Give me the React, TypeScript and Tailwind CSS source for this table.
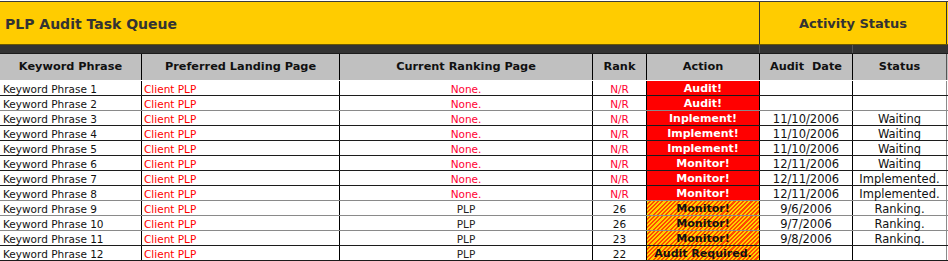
import React from "react";

type Row = {
  keyword: string;
  current: string;
  rank: string;
  action: string;
  hatch: boolean;
  date: string;
  status: string;
  line: "dark" | "gray";
};

const rows: Row[] = [
  { keyword: "Keyword Phrase 1", current: "None.", rank: "N/R", action: "Audit!", hatch: false, date: "", status: "", line: "dark" },
  { keyword: "Keyword Phrase 2", current: "None.", rank: "N/R", action: "Audit!", hatch: false, date: "", status: "", line: "gray" },
  { keyword: "Keyword Phrase 3", current: "None.", rank: "N/R", action: "Inplement!", hatch: false, date: "11/10/2006", status: "Waiting", line: "dark" },
  { keyword: "Keyword Phrase 4", current: "None.", rank: "N/R", action: "Implement!", hatch: false, date: "11/10/2006", status: "Waiting", line: "dark" },
  { keyword: "Keyword Phrase 5", current: "None.", rank: "N/R", action: "Implement!", hatch: false, date: "11/10/2006", status: "Waiting", line: "dark" },
  { keyword: "Keyword Phrase 6", current: "None.", rank: "N/R", action: "Monitor!", hatch: false, date: "12/11/2006", status: "Waiting", line: "dark" },
  { keyword: "Keyword Phrase 7", current: "None.", rank: "N/R", action: "Monitor!", hatch: false, date: "12/11/2006", status: "Implemented.", line: "dark" },
  { keyword: "Keyword Phrase 8", current: "None.", rank: "N/R", action: "Monitor!", hatch: false, date: "12/11/2006", status: "Implemented.", line: "gray" },
  { keyword: "Keyword Phrase 9", current: "PLP", rank: "26", action: "Monitor!", hatch: true, date: "9/6/2006", status: "Ranking.", line: "gray" },
  { keyword: "Keyword Phrase 10", current: "PLP", rank: "26", action: "Monitor!", hatch: true, date: "9/7/2006", status: "Ranking.", line: "gray" },
  { keyword: "Keyword Phrase 11", current: "PLP", rank: "23", action: "Monitor!", hatch: true, date: "9/8/2006", status: "Ranking.", line: "dark" },
  { keyword: "Keyword Phrase 12", current: "PLP", rank: "22", action: "Audit Required.", hatch: true, date: "", status: "", line: "dark" },
];

const headers = [
  { label: "Keyword Phrase", w: "w-[142px]" },
  { label: "Preferred Landing Page", w: "w-[198px]" },
  { label: "Current Ranking Page", w: "w-[253px]" },
  { label: "Rank", w: "w-[54px]" },
  { label: "Action", w: "w-[113px]" },
  { label: "Audit  Date", w: "w-[93px]" },
  { label: "Status", w: "w-[94px]" },
];

function DataRow({ row }: { row: Row }) {
  const line = row.line === "gray" ? "border-b-[#8a8a8a]" : "border-b-[#1c1c1c]";
  const isNone = row.current === "None.";
  return (
    <div className={`flex h-[15px] border-b ${line} text-[10.5px] leading-[16px]`}>
      <div className="w-[142px] shrink-0 border-r border-black pl-[3px] text-[#111]">{row.keyword}</div>
      <div className="w-[198px] shrink-0 border-r border-black pl-[2px] text-[#ff0000]">Client PLP</div>
      <div className={`w-[253px] shrink-0 border-r border-black text-center ${isNone ? "text-[#ff0033]" : "text-[#222]"}`}>
        {row.current}
      </div>
      <div className={`w-[54px] shrink-0 border-r border-black text-center ${isNone ? "text-[#ff0033]" : "text-[#111]"}`}>
        {row.rank}
      </div>
      <div
        className={`w-[113px] shrink-0 border-r border-black text-center text-[11px] font-bold ${
          row.hatch
            ? "bg-[repeating-linear-gradient(135deg,#ffd000_0px,#ffd000_1.5px,#ff4a00_1.5px,#ff4a00_3px)] text-[#111]"
            : "bg-[#ff0000] text-white"
        }`}
      >
        {row.action}
      </div>
      <div className="w-[93px] shrink-0 border-r border-black text-center text-[11.5px] text-[#111]">{row.date}</div>
      <div className="w-[94px] shrink-0 border-r border-[#8a8a8a] text-center text-[11.5px] text-[#111]">{row.status}</div>
    </div>
  );
}

export default function App() {
  return (
    <div className="h-[261px] w-[948px] overflow-hidden bg-white pt-px font-['DejaVu_Sans','Liberation_Sans',sans-serif]">
      {/* title band */}
      <div className="flex h-[44px] border-t border-b border-t-[#3a3a3a] border-b-[#6b5800] bg-[#ffcc00] text-[#333]">
        <div className="flex w-[760px] shrink-0 items-center border-r border-[#333] pt-[2px] pl-[5px] text-[14px] font-bold">
          PLP Audit Task Queue
        </div>
        <div className="flex w-[187px] shrink-0 items-center justify-center border-r border-[#333] pt-[2px] text-[13px] font-bold">
          Activity Status
        </div>
      </div>

      {/* dark band */}
      <div className="flex h-[8px] bg-[#333]">
        <div className="w-[760px] shrink-0 border-r border-[#555]" />
        <div className="w-[93px] shrink-0 border-r border-[#555]" />
        <div className="w-[94px] shrink-0" />
      </div>

      {/* header row */}
      <div className="flex h-[28px] border-t border-b border-t-[#1c1c1c] border-b-white bg-[#c0c0c0] text-[11.3px] font-bold text-[#111]">
        {headers.map((h, i) => (
          <div
            key={h.label}
            className={`${h.w} flex shrink-0 items-center justify-center whitespace-pre border-r pt-px ${
              i === headers.length - 1 ? "border-[#555]" : "border-black"
            }`}
          >
            {h.label}
          </div>
        ))}
      </div>

      {rows.map((r) => (
        <DataRow key={r.keyword} row={r} />
      ))}
    </div>
  );
}
